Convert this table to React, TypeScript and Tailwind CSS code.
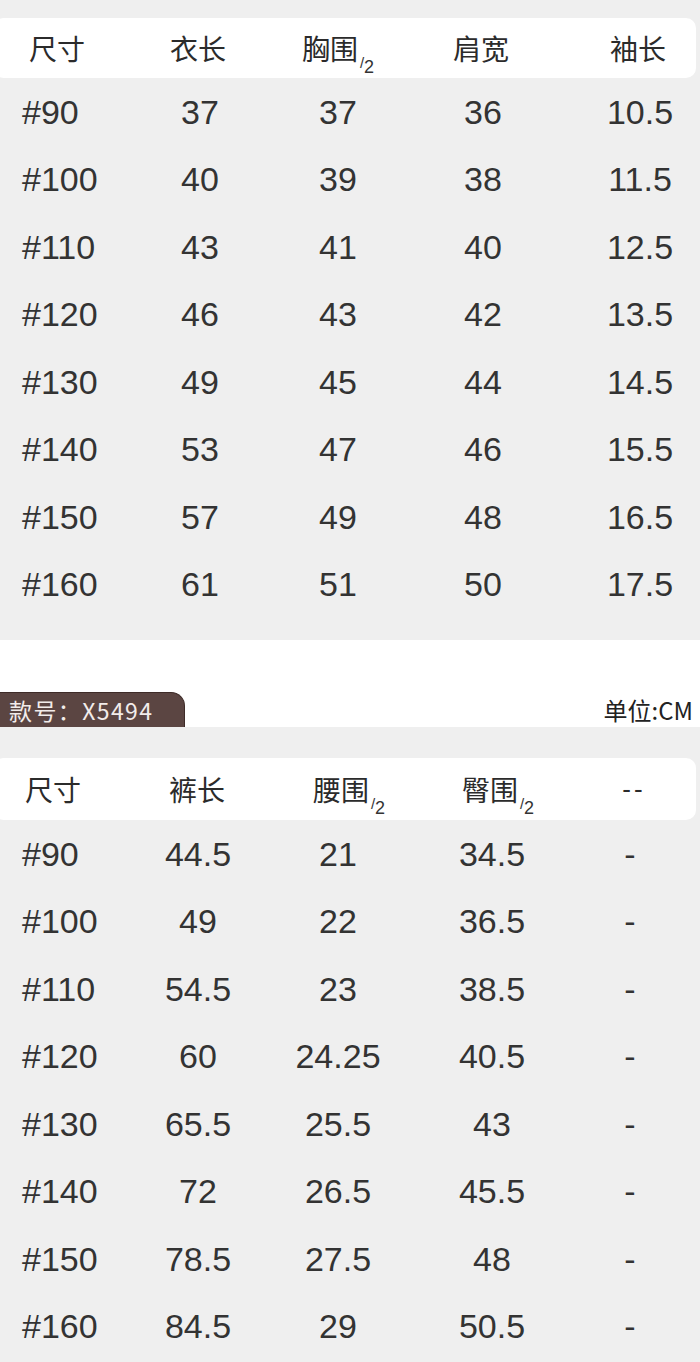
const top = {
  rows: [
    ['#90', '37', '37', '36', '10.5'],
    ['#100', '40', '39', '38', '11.5'],
    ['#110', '43', '41', '40', '12.5'],
    ['#120', '46', '43', '42', '13.5'],
    ['#130', '49', '45', '44', '14.5'],
    ['#140', '53', '47', '46', '15.5'],
    ['#150', '57', '49', '48', '16.5'],
    ['#160', '61', '51', '50', '17.5'],
  ],
};

const bottom = {
  rows: [
    ['#90', '44.5', '21', '34.5', '-'],
    ['#100', '49', '22', '36.5', '-'],
    ['#110', '54.5', '23', '38.5', '-'],
    ['#120', '60', '24.25', '40.5', '-'],
    ['#130', '65.5', '25.5', '43', '-'],
    ['#140', '72', '26.5', '45.5', '-'],
    ['#150', '78.5', '27.5', '48', '-'],
    ['#160', '84.5', '29', '50.5', '-'],
  ],
};

const cjk = "font-['Noto_Sans_CJK_SC','Noto_Sans',sans-serif]";
const num = "font-['Liberation_Sans','Noto_Sans',sans-serif]";

// header label with a small "/2" hanging at the lower right
function Half({ children }: { children: string }) {
  return (
    <span className="whitespace-nowrap">
      {children}
      <span className={`${num} relative top-[13px] ml-[2px] text-[18px] text-[#333]`}>
        <span className="inline-block -translate-y-[5px] text-[15px]">/</span>2
      </span>
    </span>
  );
}

export default function App() {
  return (
    <div className="w-[700px] h-[1362px] overflow-hidden bg-[#efefef] text-[#2b2b2b]">
      {/* first chart */}
      <div className="pt-[18px] pb-[22px]">
        <div className={`grid grid-cols-[116px_168px_108px_182px_132px] h-[60px] items-center bg-white rounded-[10px] -ml-[6px] w-[702px] ${cjk} text-[28px] leading-none`}>
          <div className="pl-[35px]">尺寸</div>
          <div className="text-center pl-[8px]">衣长</div>
          <div className="text-center pl-[12px]"><Half>胸围</Half></div>
          <div className="text-center pl-[8px]">肩宽</div>
          <div className="text-center pl-[8px]">袖长</div>
        </div>
        {top.rows.map((r) => (
          <div key={r[0]} className={`grid grid-cols-[116px_168px_108px_182px_132px] h-[67.5px] items-center ${num} text-[34px] leading-none text-[#333]`}>
            <div className="pl-[22px]">{r[0]}</div>
            <div className="text-center">{r[1]}</div>
            <div className="text-center">{r[2]}</div>
            <div className="text-center">{r[3]}</div>
            <div className="text-center">{r[4]}</div>
          </div>
        ))}
      </div>

      {/* label band */}
      <div className="h-[87px] bg-white flex items-end justify-between">
        <div className={`h-[35px] w-[185px] bg-[#5b4542] border-t border-r border-[#3e2b28] rounded-tr-[14px] flex items-center pl-[9px] ${cjk} text-[23px] text-[#f2ecea] tracking-[1.4px]`}>
          款号：X5494
        </div>
        <div className={`h-[35px] flex items-center pr-[7px] ${cjk} text-[24px] text-[#222]`}>
          单位:CM
        </div>
      </div>

      {/* second chart */}
      <div className="pt-[31px]">
        <div className={`grid grid-cols-[112px_172px_108px_200px_76px] h-[62px] items-center bg-white rounded-[10px] -ml-[6px] w-[702px] ${cjk} text-[28px] leading-none`}>
          <div className="pl-[31px]">尺寸</div>
          <div className="text-center pl-[10px]">裤长</div>
          <div className="text-center pl-[34px]"><Half>腰围</Half></div>
          <div className="text-center pl-[24px]"><Half>臀围</Half></div>
          <div className={`text-center pl-[20px] ${num} text-[26px] tracking-[3px]`}>--</div>
        </div>
        {bottom.rows.map((r) => (
          <div key={r[0]} className={`grid grid-cols-[112px_172px_108px_200px_76px] h-[67.5px] items-center ${num} text-[34px] leading-none text-[#333]`}>
            <div className="pl-[22px]">{r[0]}</div>
            <div className="text-center">{r[1]}</div>
            <div className="text-center">{r[2]}</div>
            <div className="text-center">{r[3]}</div>
            <div className="text-center">{r[4]}</div>
          </div>
        ))}
      </div>
    </div>
  );
}
